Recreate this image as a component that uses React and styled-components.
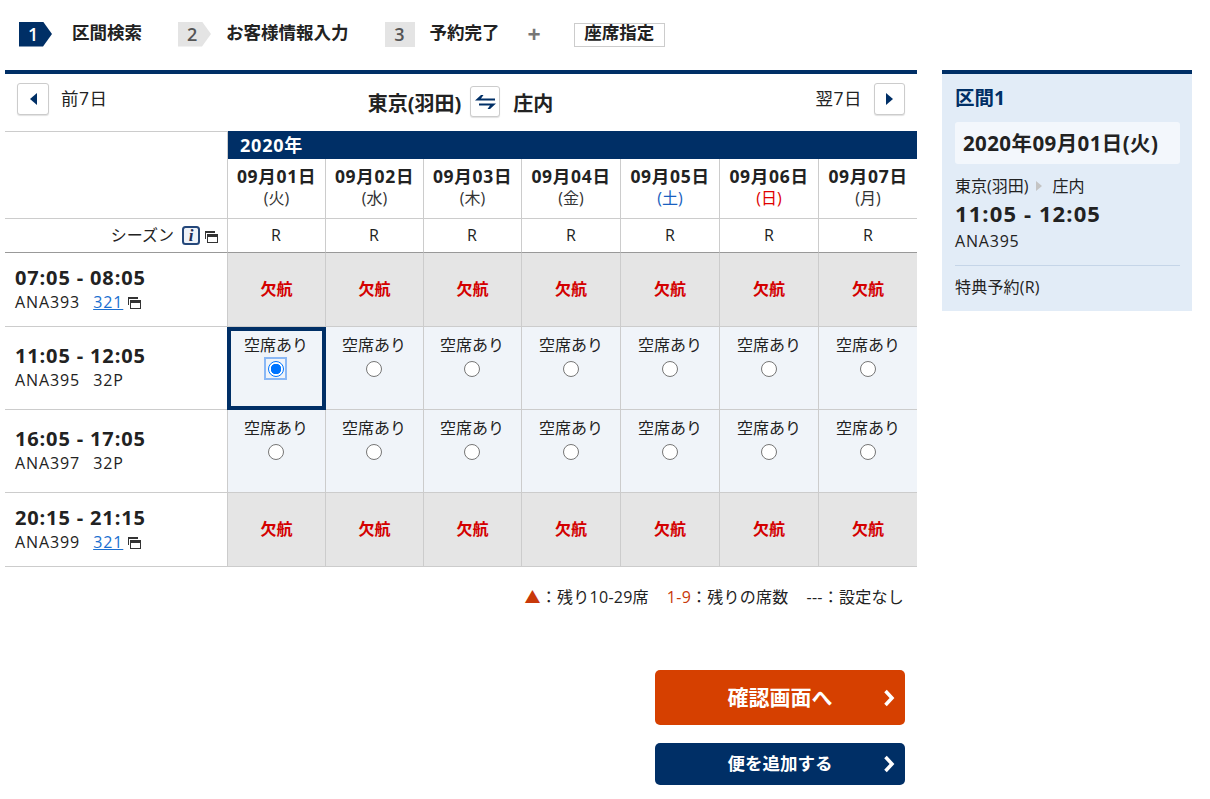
import React from 'react';
import styled, { createGlobalStyle } from 'styled-components';

const NAVY = '#002f66';
const LINE = '#cccccc';

const GlobalStyle = createGlobalStyle`
    html, body {
        margin: 0;
        padding: 0;
        background: #fff;
    }
    body {
        font-family: "Open Sans", "Noto Sans CJK JP", sans-serif;
        color: #222;
        font-size: 16px;
    }
`;

const Page = styled.div`
    width: 1210px;
    height: 799px;
    overflow: hidden;
    padding: 0 18px 0 5px;
    box-sizing: border-box;
`;

const Steps = styled.ol`
    display: flex;
    align-items: center;
    height: 70px;
    margin: 0;
    padding: 0 0 2px 14px;
    box-sizing: border-box;
    list-style: none;
    font-weight: 700;
    font-size: 17.5px;
    line-height: 24px;
`;

const Step = styled.li`
    display: flex;
    align-items: center;
    margin-right: ${p => p.$gap}px;
`;

const StepLabel = styled.span`
    margin-top: -4px;
    white-space: nowrap;
`;

const StepNum = styled.span`
    display: block;
    width: ${p => (p.$flat ? 30 : 33)}px;
    height: 25px;
    line-height: 25px;
    margin-right: ${p => p.$gap}px;
    font-size: 18px;
    font-weight: 600;
    text-align: ${p => (p.$flat ? 'center' : 'left')};
    text-indent: ${p => (p.$flat ? 0 : 9)}px;
    color: ${p => (p.$active ? '#fff' : '#555')};
    background: ${p => (p.$active ? NAVY : '#e4e4e4')};
    clip-path: ${p => (p.$flat ? 'none' : 'polygon(0 0, 24px 0, 100% 50%, 24px 100%, 0 100%)')};
`;

const Plus = styled.span`
    color: #777;
    font-size: 23px;
    font-weight: 700;
    margin-right: 33px;
    line-height: 1;
`;

const SeatTag = styled.span`
    display: block;
    width: 91px;
    height: 24px;
    line-height: 17px;
    margin-top: 1px;
    border: 1px solid ${LINE};
    box-sizing: border-box;
    text-align: center;
    white-space: nowrap;
`;

const Columns = styled.div`
    display: flex;
    align-items: flex-start;
    gap: 25px;
`;

const Main = styled.main`
    width: 912px;
    flex: none;
`;

const RouteBar = styled.div`
    display: flex;
    align-items: flex-start;
    justify-content: space-between;
    height: 61px;
    border-top: 4px solid ${NAVY};
    padding: 9px 12px 0;
    box-sizing: border-box;
`;

const PageLink = styled.div`
    display: flex;
    align-items: center;
    gap: 12px;
    width: 180px;
    height: 32px;
    font-size: 17.5px;
    line-height: 26px;
    letter-spacing: 0.5px;
    white-space: nowrap;
    justify-content: ${p => (p.$end ? 'flex-end' : 'flex-start')};
`;

const PageLabel = styled.span`
    margin-top: -3px;
`;

const SquareButton = styled.button`
    display: flex;
    align-items: center;
    justify-content: center;
    width: ${p => p.$w}px;
    height: ${p => p.$h}px;
    padding: 0;
    background: #fff;
    border: 1px solid ${LINE};
    border-radius: 3px;
    box-shadow: 0 1px 1px rgba(0, 0, 0, 0.12);
`;

const Route = styled.div`
    display: flex;
    align-items: center;
    margin-top: 3px;
    margin-right: 1px;
    font-size: 20px;
    font-weight: 700;
    white-space: nowrap;
`;

const RouteName = styled.span`
    margin-top: 2px;
`;

const RouteSwap = styled.span`
    margin: 0 13px 0 9px;
`;

const Grid = styled.div`
    display: grid;
    grid-template-columns: 223px repeat(3, 98px) repeat(3, 99px) 98px;
    grid-template-rows: 27px 60px 34px 74px 83px 83px 74px;
    border-top: 1px solid ${LINE};
`;

const Corner = styled.div`
    grid-row: 1 / span 2;
    border-bottom: 1px solid ${LINE};
    border-right: 1px solid ${LINE};
`;

const YearBand = styled.div`
    grid-column: 2 / -1;
    margin-top: -1px;
    background: ${NAVY};
    color: #fff;
    font-weight: 700;
    font-size: 18px;
    letter-spacing: 0.8px;
    line-height: 28px;
    padding-left: 12px;
`;

const DateCell = styled.div`
    display: flex;
    flex-direction: column;
    align-items: center;
    padding-top: 5px;
    border-bottom: 1px solid ${LINE};
    border-right: 1px solid ${LINE};
    font-size: 17.5px;
    font-weight: 700;
    letter-spacing: 0.7px;
    line-height: 25px;
    white-space: nowrap;
    ${p => p.$last && 'border-right: 0;'}
`;

const Weekday = styled.span`
    font-size: 16px;
    font-weight: 400;
    letter-spacing: 0;
    line-height: 18px;
    color: ${p => p.$color || '#333'};
`;

const SeasonLabel = styled.div`
    display: flex;
    align-items: center;
    justify-content: flex-end;
    padding-right: 9px;
    font-size: 16px;
    border-bottom: 1px solid #999;
    border-right: 1px solid ${LINE};
`;

const SeasonText = styled.span`
    margin-right: 8px;
    margin-bottom: 3px;
`;

const SeasonCell = styled.div`
    display: flex;
    align-items: center;
    justify-content: center;
    padding: 0 ${p => (p.$narrow ? 1 : 0)}px 2px 0;
    font-size: 16px;
    border-bottom: 1px solid #999;
    border-right: 1px solid ${LINE};
    ${p => p.$last && 'border-right: 0;'}
`;

const FlightCell = styled.div`
    display: flex;
    flex-direction: column;
    justify-content: center;
    padding: 0 0 2px 10px;
    border-bottom: 1px solid ${LINE};
    border-right: 1px solid ${LINE};
`;

const FlightTime = styled.div`
    font-size: 20px;
    font-weight: 700;
    line-height: 26px;
    letter-spacing: 0.85px;
    white-space: nowrap;
`;

const FlightMeta = styled.div`
    display: flex;
    align-items: center;
    font-size: 16px;
    line-height: 22px;
    letter-spacing: 0.9px;
    white-space: nowrap;
`;

const Aircraft = styled.span`
    margin-left: 13px;
`;

const AircraftLink = styled.a`
    margin-left: 13px;
    color: #1a6fd0;
    text-decoration: underline;
`;

const Cancelled = styled.div`
    display: flex;
    align-items: center;
    justify-content: center;
    padding-bottom: 3px;
    background: #e5e5e5;
    color: #d40000;
    font-size: 16px;
    font-weight: 700;
    border-bottom: 1px solid ${LINE};
    border-right: 1px solid ${LINE};
    ${p => p.$last && 'border-right: 0;'}
`;

const SeatCell = styled.label`
    display: flex;
    flex-direction: column;
    align-items: center;
    padding: 7px ${p => (p.$narrow ? 1 : 0)}px 0 0;
    background: #f0f4f9;
    font-size: 16px;
    line-height: 22px;
    border-bottom: 1px solid ${LINE};
    border-right: 1px solid ${LINE};
    ${p => p.$last && 'border-right: 0;'}
    ${p => p.$selected && `
        padding: 3px 1px 0 0;
        margin-left: -1px;
        border: 4px solid ${NAVY};
        box-sizing: border-box;
    `}
`;

const Radio = styled.span`
    position: relative;
    display: block;
    box-sizing: border-box;
    width: 16px;
    height: 16px;
    margin-top: 5px;
    border-radius: 50%;
    background: #fff;
    border: 1px solid #767676;
    ${p => p.$checked && `
        border: 1.5px solid #0075ff;
        background: radial-gradient(circle, #0075ff 0 5px, #fff 5.5px);
        &::after {
            content: "";
            position: absolute;
            left: -5px;
            top: -5px;
            width: 23px;
            height: 23px;
            box-sizing: border-box;
            border: 2px solid #8ab8f5;
        }
    `}
`;

const Legend = styled.div`
    display: flex;
    justify-content: flex-end;
    gap: 18px;
    padding: 20px 13px 0 0;
    font-size: 16px;
    letter-spacing: 0.25px;
    line-height: 20px;
    white-space: nowrap;
`;

const LegendMark = styled.span`
    color: #c8380a;
`;

const Actions = styled.div`
    display: flex;
    flex-direction: column;
    align-items: flex-end;
    gap: 18px;
    margin-top: 63px;
    padding-right: 12px;
`;

const ActionButton = styled.button`
    position: relative;
    width: 250px;
    height: ${p => p.$h}px;
    border: 0;
    border-radius: 5px;
    padding: 0 0 ${p => (p.$h > 50 ? 4 : 3)}px;
    background: ${p => p.$bg};
    color: #fff;
    font-family: inherit;
    font-weight: 700;
    font-size: ${p => p.$size}px;
`;

const Chevron = styled.svg`
    position: absolute;
    right: 10px;
    top: 50%;
    margin-top: -9px;
`;

const Side = styled.aside`
    width: 250px;
    flex: none;
    height: 241px;
    background: #e2ecf7;
    border-top: 4px solid ${NAVY};
    padding: 10px 12px 0 13px;
    box-sizing: border-box;
`;

const SideTitle = styled.h2`
    margin: 0;
    font-size: 19.5px;
    line-height: 28px;
    font-weight: 700;
    color: ${NAVY};
`;

const SideDate = styled.div`
    height: 42px;
    line-height: 42px;
    margin-top: 10px;
    padding-left: 8px;
    background: #f3f7fc;
    border-radius: 3px;
    font-size: 20.5px;
    letter-spacing: 0.4px;
    font-weight: 700;
    white-space: nowrap;
`;

const SideRoute = styled.div`
    display: flex;
    align-items: center;
    gap: 7px;
    margin-top: 10px;
    font-size: 16px;
    line-height: 24px;
`;

const SideArrow = styled.span`
    width: 0;
    height: 0;
    margin: 0 3px 0 1px;
    border-left: 6px solid #c4c4c4;
    border-top: 5px solid transparent;
    border-bottom: 5px solid transparent;
`;

const SideTime = styled.div`
    font-size: 22px;
    font-weight: 700;
    line-height: 30px;
    letter-spacing: 1.1px;
`;

const SideFlight = styled.div`
    margin-top: 1px;
    font-size: 16px;
    line-height: 24px;
    letter-spacing: 0.8px;
    padding-bottom: 12px;
    border-bottom: 1px solid #c5d5e8;
`;

const SideFare = styled.div`
    margin-top: 10px;
    font-size: 16px;
    letter-spacing: 0.2px;
    line-height: 22px;
`;

const WindowIcon = () => (
    <svg width="13" height="12" viewBox="0 0 13 12" style={{ marginLeft: 5, marginTop: 2 }}>
        <path d="M0 0h10v2H0z M0 2h1v6H0z" fill="#333" />
        <rect x="2.5" y="3.5" width="10" height="8" fill="#fff" stroke="#333" />
        <rect x="2" y="3" width="11" height="3" fill="#333" />
    </svg>
);

const InfoIcon = () => (
    <svg width="18" height="19" viewBox="0 0 18 19" style={{ marginBottom: 1 }}>
        <rect x="1" y="1" width="16" height="17" rx="2.5" fill="#eef2f8" stroke="#24477a" strokeWidth="2" />
        <text x="9" y="15" textAnchor="middle" fontFamily="Liberation Serif" fontStyle="italic" fontWeight="700" fontSize="17" fill="#1d2c55">i</text>
    </svg>
);

const Triangle = ({ flip }) => (
    <svg width="7" height="12" viewBox="0 0 7 12">
        <path d={flip ? 'M0 0l7 6-7 6z' : 'M7 0L0 6l7 6z'} fill={NAVY} />
    </svg>
);

const SwapIcon = () => (
    <svg width="21" height="16" viewBox="0 0 21 16">
        <path d="M0 6.500L6 1h2.500L6 4.500h14v2z" fill={NAVY} />
        <path d="M4 9.500h17L15 15h-2.500L15 11.500H4z" fill={NAVY} />
    </svg>
);

const WhiteChevron = () => (
    <Chevron width="12" height="18" viewBox="0 0 12 18">
        <path d="M2.500 2L9 9L2.500 16" fill="none" stroke="#fff" strokeWidth="3.5" />
    </Chevron>
);

const DATES = [
    ['09月01日', '(火)'],
    ['09月02日', '(水)'],
    ['09月03日', '(木)'],
    ['09月04日', '(金)'],
    ['09月05日', '(土)', '#1a5fc0'],
    ['09月06日', '(日)', '#e00000'],
    ['09月07日', '(月)']
];

const FLIGHTS = [
    { time: '07:05 - 08:05', no: 'ANA393', craft: '321', link: true, cancelled: true },
    { time: '11:05 - 12:05', no: 'ANA395', craft: '32P', selected: 0 },
    { time: '16:05 - 17:05', no: 'ANA397', craft: '32P' },
    { time: '20:15 - 21:15', no: 'ANA399', craft: '321', link: true, cancelled: true }
];

const App = () => (
    <Page>
        <GlobalStyle />
        <Steps>
            <Step $gap={36}>
                <StepNum $active $gap={20}>1</StepNum>
                <StepLabel>区間検索</StepLabel>
            </Step>
            <Step $gap={36}>
                <StepNum $gap={15}>2</StepNum>
                <StepLabel>お客様情報入力</StepLabel>
            </Step>
            <Step $gap={28}>
                <StepNum $flat $gap={15}>3</StepNum>
                <StepLabel>予約完了</StepLabel>
            </Step>
            <Plus>+</Plus>
            <SeatTag>座席指定</SeatTag>
        </Steps>
        <Columns>
            <Main>
                <RouteBar>
                    <PageLink>
                        <SquareButton $w={32} $h={32} aria-label="前7日"><Triangle /></SquareButton>
                        <PageLabel>前7日</PageLabel>
                    </PageLink>
                    <Route>
                        <RouteName>東京(羽田)</RouteName>
                        <RouteSwap>
                            <SquareButton $w={30} $h={31} aria-label="入替"><SwapIcon /></SquareButton>
                        </RouteSwap>
                        <RouteName>庄内</RouteName>
                    </Route>
                    <PageLink $end>
                        <PageLabel>翌7日</PageLabel>
                        <SquareButton $w={31} $h={32} aria-label="翌7日"><Triangle flip /></SquareButton>
                    </PageLink>
                </RouteBar>
                <Grid>
                    <Corner />
                    <YearBand>2020年</YearBand>
                    {DATES.map(([date, day, color], i) => (
                        <DateCell key={date} $last={i === 6}>
                            {date}
                            <Weekday $color={color}>{day}</Weekday>
                        </DateCell>
                    ))}
                    <SeasonLabel>
                        <SeasonText>シーズン</SeasonText>
                        <InfoIcon />
                        <WindowIcon />
                    </SeasonLabel>
                    {DATES.map(([date], i) => (
                        <SeasonCell key={date} $last={i === 6} $narrow={i < 3}>R</SeasonCell>
                    ))}
                    {FLIGHTS.map(flight => (
                        <React.Fragment key={flight.no}>
                            <FlightCell>
                                <FlightTime>{flight.time}</FlightTime>
                                <FlightMeta>
                                    {flight.no}
                                    {flight.link
                                        ? <AircraftLink href="#">{flight.craft}</AircraftLink>
                                        : <Aircraft>{flight.craft}</Aircraft>}
                                    {flight.link && <WindowIcon />}
                                </FlightMeta>
                            </FlightCell>
                            {DATES.map(([date], i) => (flight.cancelled
                                ? <Cancelled key={date} $last={i === 6}>欠航</Cancelled>
                                : (
                                    <SeatCell key={date} $last={i === 6} $narrow={i < 3} $selected={flight.selected === i}>
                                        空席あり
                                        <Radio $checked={flight.selected === i} />
                                    </SeatCell>
                                )))}
                        </React.Fragment>
                    ))}
                </Grid>
                <Legend>
                    <span><LegendMark>▲</LegendMark>：残り10-29席</span>
                    <span><LegendMark>1-9</LegendMark>：残りの席数</span>
                    <span>---：設定なし</span>
                </Legend>
                <Actions>
                    <ActionButton $h={55} $bg="#d64000" $size={21}>
                        確認画面へ
                        <WhiteChevron />
                    </ActionButton>
                    <ActionButton $h={42} $bg={NAVY} $size={17.5}>
                        便を追加する
                        <WhiteChevron />
                    </ActionButton>
                </Actions>
            </Main>
            <Side>
                <SideTitle>区間1</SideTitle>
                <SideDate>2020年09月01日(火)</SideDate>
                <SideRoute>
                    東京(羽田)
                    <SideArrow />
                    庄内
                </SideRoute>
                <SideTime>11:05 - 12:05</SideTime>
                <SideFlight>ANA395</SideFlight>
                <SideFare>特典予約(R)</SideFare>
            </Side>
        </Columns>
    </Page>
);

export default App;
